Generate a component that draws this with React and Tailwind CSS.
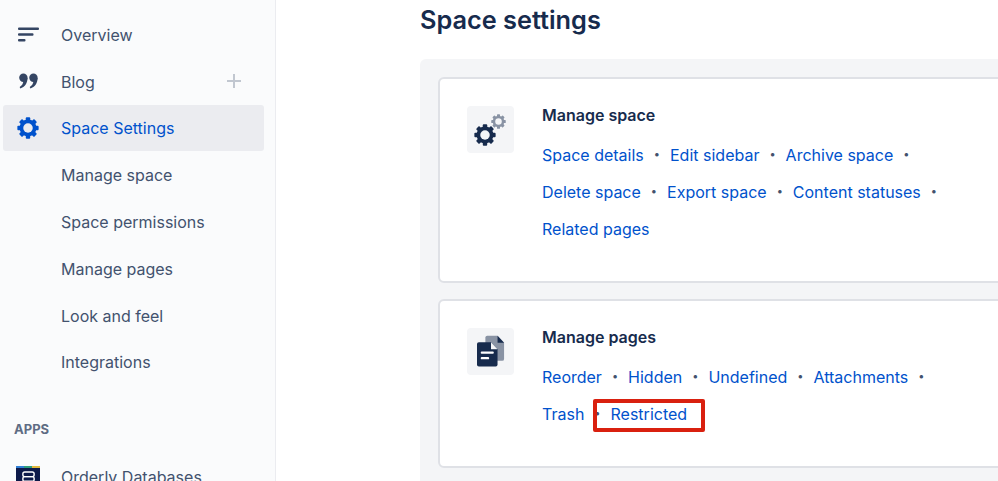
import React from 'react'

const FONT = 'font-["Inter","Liberation_Sans",sans-serif]'

const GearIcon = ({ className, hole = 'white' }) => (
  <svg viewBox="0 0 24 24" className={className} fill="currentColor">
    {[0, 45, 90, 135].map((a) => (
      <rect key={a} x="9.6" y="0.4" width="4.8" height="23.2" rx="1" transform={`rotate(${a} 12 12)`} />
    ))}
    <circle cx="12" cy="12" r="9.2" />
    <circle cx="12" cy="12" r="5.2" fill={hole} />
  </svg>
)

const OverviewIcon = () => (
  <svg viewBox="0 0 21 15" className="w-[21px] h-[15px]" fill="#344563">
    <rect x="0" y="0.5" width="21" height="2.4" rx="1" />
    <rect x="0" y="6.3" width="15.5" height="2.4" rx="1" />
    <rect x="0" y="12.1" width="7.5" height="2.4" rx="1" />
  </svg>
)

const QuoteIcon = () => (
  <svg viewBox="0 0 20 16" className="w-[19px] h-[16px]" fill="#344563">
    <circle cx="4.6" cy="4.6" r="4.4" />
    <path d="M9 4.6C9 10.4 6 14.4 1.4 15.8L0.7 14.2C3.2 12.8 4.4 10.8 4.6 8L9 4.6Z" />
    <circle cx="15.2" cy="4.6" r="4.4" />
    <path d="M19.6 4.6C19.6 10.4 16.6 14.4 12 15.8L11.3 14.2C13.8 12.8 15 10.8 15.2 8L19.6 4.6Z" />
  </svg>
)

const PagesIcon = () => (
  <svg viewBox="0 0 30 34" className="w-[28px] h-[33px]">
    <path d="M9 2a2 2 0 0 1 2-2h11l7 7.5V25a2 2 0 0 1-2 2H11a2 2 0 0 1-2-2Z" fill="#8993a4" />
    <path d="M22 0l7 7.5h-7Z" fill="#172b4d" />
    <path d="M0 9a2 2 0 0 1 2-2h13l7 7.5V31a2 2 0 0 1-2 2H2a2 2 0 0 1-2-2Z" fill="#172b4d" />
    <path d="M15 7l7 7.5h-7Z" fill="#f4f5f7" />
    <rect x="4" y="17" width="14" height="2.4" rx="1" fill="#fff" />
    <rect x="4" y="23" width="9" height="2.4" rx="1" fill="#fff" />
  </svg>
)

const SidebarRow = ({ icon, label, active, action }) => (
  <div className={`h-[46.8px] flex items-center rounded-[3px] ml-[3px] mr-[11px] ${active ? 'bg-[#ebecf0]' : ''}`}>
    <div className="w-[50px] mr-[8px] shrink-0 flex justify-center">{icon}</div>
    <span className={`pt-[1px] text-[16px] ${active ? 'text-[#0052cc]' : 'text-[#42526e]'}`}>{label}</span>
    {action && <span className="ml-auto mr-[23px] text-[#c1c7d0]">{action}</span>}
  </div>
)

const Dot = () => <span className="text-[#42526e] text-[11px] mx-[10px]">•</span>

const LinkRows = ({ rows }) => (
  <div className="flex flex-col">
    {rows.map((row, i) => (
      <div key={i} className="h-[37px] flex items-center text-[16px] text-[#0052cc]">
        {row.links.map((l, j) => (
          <React.Fragment key={l}>
            <span>{l}</span>
            {(j < row.links.length - 1 || row.trailing) && <Dot />}
          </React.Fragment>
        ))}
      </div>
    ))}
  </div>
)

const Card = ({ icon, title, rows, className, children }) => (
  <div className={`relative bg-white border-2 border-[#dfe1e6] rounded-[6px] pl-[27px] pt-[27px] flex ${className}`}>
    <div className="w-[47px] h-[47px] rounded-[4px] bg-[#f4f5f7] flex items-center justify-center shrink-0">{icon}</div>
    <div className="ml-[28px] -mt-[2px]">
      <div className="text-[16px] leading-[22px] font-semibold text-[#172b4d] mb-[10px]">{title}</div>
      <LinkRows rows={rows} />
    </div>
    {children}
  </div>
)

export default function App() {
  return (
    <div className={`w-[998px] h-[481px] overflow-hidden flex bg-white ${FONT}`}>
      <aside className="w-[276px] shrink-0 h-full bg-[#fafbfc] border-r border-[#ebecf0] pt-[11px] overflow-hidden">
        <SidebarRow icon={<OverviewIcon />} label="Overview" />
        <SidebarRow
          icon={<QuoteIcon />}
          label="Blog"
          action={
            <svg viewBox="0 0 14 14" className="w-[14px] h-[14px]" fill="currentColor">
              <rect x="6" y="0" width="2" height="14" />
              <rect x="0" y="6" width="14" height="2" />
            </svg>
          }
        />
        <SidebarRow active icon={<GearIcon className="w-[22px] h-[22px] text-[#0052cc]" hole="#ebecf0" />} label="Space Settings" />
        <SidebarRow label="Manage space" />
        <SidebarRow label="Space permissions" />
        <SidebarRow label="Manage pages" />
        <SidebarRow label="Look and feel" />
        <SidebarRow label="Integrations" />
        <div className="mt-[36px] pl-[14px] text-[13px] leading-[16px] font-bold text-[#5e6c84]">APPS</div>
        <div className="mt-[29px] flex items-start">
          <div className="ml-[16px] w-[24px] h-[24px] shrink-0 bg-[#0d1a4a] flex flex-col items-center">
            <div className="w-full h-[2px] flex">
              <div className="flex-1 bg-[#2f7fd6]"></div>
              <div className="flex-1 bg-[#2e9e7a]"></div>
              <div className="flex-1 bg-[#e0b83c]"></div>
            </div>
            <svg viewBox="0 0 16 16" className="w-[15px] h-[15px] mt-[3px]" fill="none" stroke="#fff" strokeWidth="1.5">
              <rect x="2" y="1" width="12" height="5" rx="2" />
              <rect x="2" y="6" width="12" height="5" rx="2" />
            </svg>
          </div>
          <span className="ml-[21px] text-[16px] leading-[22px] text-[#42526e]">Orderly Databases</span>
        </div>
      </aside>

      <main className="flex-1 min-w-0 pl-[144px] overflow-hidden">
        <h1 className="h-[59px] pt-[1px] text-[25.3px] leading-[38px] font-semibold text-[#172b4d] whitespace-nowrap">Space settings</h1>
        <div className="w-[700px] bg-[#f4f5f7] rounded-[6px] p-[18px] pb-[30px] flex flex-col gap-[16px]">
          <Card
            className="h-[206px]"
            title="Manage space"
            icon={
              <div className="relative w-[32px] h-[32px] mr-[2px]">
                <GearIcon className="absolute left-0 bottom-0 w-[22px] h-[22px] text-[#172b4d]" hole="#f4f5f7" />
                <GearIcon className="absolute right-0 top-0 w-[15px] h-[15px] text-[#8993a4]" hole="#f4f5f7" />
              </div>
            }
            rows={[
              { links: ['Space details', 'Edit sidebar', 'Archive space'], trailing: true },
              { links: ['Delete space', 'Export space', 'Content statuses'], trailing: true },
              { links: ['Related pages'] },
            ]}
          />
          <Card
            className="h-[169px]"
            title="Manage pages"
            icon={<PagesIcon />}
            rows={[
              { links: ['Reorder', 'Hidden', 'Undefined', 'Attachments'], trailing: true },
              { links: ['Trash', 'Restricted'] },
            ]}
          >
            <div className="absolute left-[153px] top-[98px] w-[112px] h-[33px] border-[4px] border-[#d9200f] rounded-[2px]"></div>
          </Card>
        </div>
      </main>
    </div>
  )
}
